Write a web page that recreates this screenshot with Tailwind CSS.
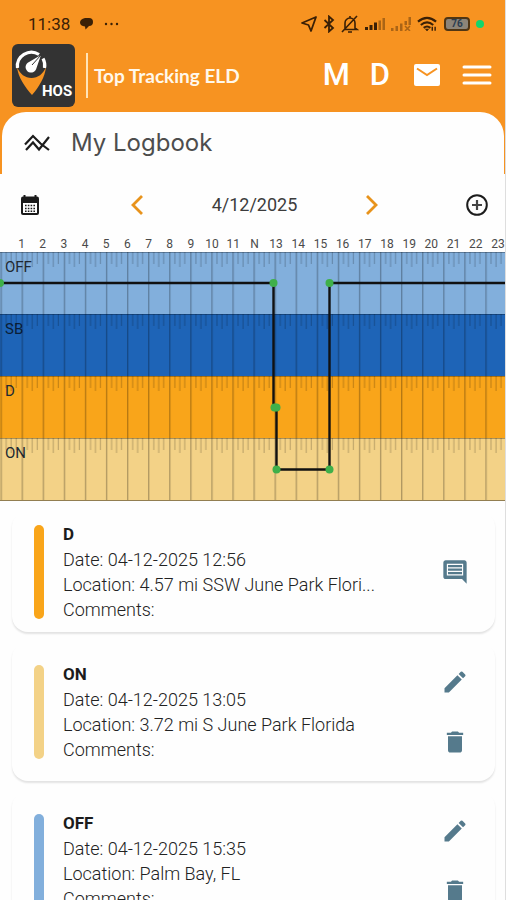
<!DOCTYPE html>
<html lang="en">
<head>
<meta charset="utf-8">
<meta name="viewport" content="width=device-width, initial-scale=1">
<title>Top Tracking ELD</title>
<script src="https://cdn.jsdelivr.net/npm/@tailwindcss/browser@4"></script>
</head>
<body class="h-screen overflow-hidden border-r border-[#dedede] bg-[#fefefe] font-['Roboto',sans-serif] text-[#333]">
<header class="-mr-px bg-[#f79321]">
  <!-- Device status bar -->
  <div class="flex h-[42px] items-center justify-between pt-[6px] pr-[22px] pl-7 text-[#3a2006]">
    <div class="flex items-center gap-[10px]">
      <span class="text-[17px] leading-5">11:38</span>
      <svg class="h-3 w-[14px]" viewBox="0 0 14 12" fill="currentColor"><path d="M5 0h4q4 0 4 4t-4 4l-3.500 3.500-.5-3Q0 8 0 4.500T5 0z"/></svg>
      <svg class="h-1 w-[15px]" viewBox="0 0 15 4" fill="currentColor"><circle cx="2" cy="2" r="1.200"/><circle cx="7.500" cy="2" r="1.200"/><circle cx="13" cy="2" r="1.200"/></svg>
    </div>
    <div class="flex items-center gap-[6px]">
      <svg class="h-4 w-4" viewBox="0 0 16 16" fill="none" stroke="currentColor" stroke-width="1.800" stroke-linejoin="round"><path d="M15 1 1 7l6.500 2L10 15z"/></svg>
      <svg class="h-[18px] w-3" viewBox="0 0 12 18" fill="none" stroke="currentColor" stroke-width="1.800"><path d="M1.500 5l8.500 8-4 3.500v-15L10 5l-8.500 8"/></svg>
      <svg class="h-[18px] w-[18px]" viewBox="0 0 18 18" fill="none" stroke="currentColor" stroke-width="1.600"><path d="M4 14V8a5 5 0 0 1 10 0v5l2 1.500H3M7 17h4M16 1 1 17M9 1v2"/></svg>
      <svg class="h-3 w-5" viewBox="0 0 20 12" fill="currentColor"><path d="M0 9h3v3H0zM4.500 7h3v5h-3zM9 4.500h3V12H9z"/><path opacity=".4" d="M13.500 2.500h2.500V12h-2.500zM17.500 0H20v12h-2.500z"/></svg>
      <svg class="h-[14px] w-5" viewBox="0 0 20 14" fill="currentColor" opacity=".4"><path d="M0 11h2.500v3H0zM4.500 9H7v5H4.500zM9 6.500h2.500V14H9zM13.500 4H16v4h-2.500zM17.500 0H20v8h-2.500z"/><path d="m14 9 5 5m0-5-5 5" stroke="currentColor" stroke-width="1.500"/></svg>
      <svg class="h-4 w-[21px]" viewBox="0 0 22 16" fill="none" stroke="currentColor" stroke-width="2.200"><path d="M1 5.500q9.500-8 19 0M4 9q6.500-5.500 13 0M7 12q3.500-2.800 7 0"/><path d="M9 13.500h3L10.500 15z" fill="currentColor" stroke-width="1"/><path d="M16 11v4m3-4v4" stroke-width="1.500"/></svg>
      <span class="flex h-[14px] w-[26px] items-center justify-center rounded-[4px] border-2 border-[#4f3514] bg-[#8c8479] text-[10px] leading-none font-bold text-[#2b3c50]">76</span>
      <span class="size-2 rounded-full bg-[#12d66c]"></span>
    </div>
  </div>

  <!-- App bar -->
  <div class="flex h-[70px] items-center justify-between pr-[14px] pb-1 pl-3">
    <div class="flex items-center">
      <svg class="size-[63px]" viewBox="0 0 63 63" role="img" aria-label="HOS logo">
        <rect width="63" height="63" rx="6" fill="#333333"/>
        <path d="M5 23C6 33 13 43 20 51 27 43 33 33 34 23 31 30 26 34 19.500 34 13 34 8 30 5 23z" fill="#f79321"/>
        <path d="M5.500 24A14 14 0 0 1 27 10.500M31 14.500A14 14 0 0 1 32.500 24" fill="none" stroke="#fff" stroke-width="3.200"/>
        <path d="M29 11 24.500 24a5.500 5.500 0 1 1-7.500-6z" fill="#fff"/>
        <path d="M29 11 20 21" stroke="#333" stroke-width="1"/>
        <text x="30" y="52" fill="#fff" font-family="Roboto, sans-serif" font-size="15" font-weight="700">HOS</text>
      </svg>
      <div class="ml-[11px] h-[45px] w-[2px] bg-[#ffe3b8]"></div>
      <h1 class="ml-[6px] pt-[2px] font-['Lato',sans-serif] text-[19px] leading-6 font-bold text-[#fff8ec]">Top Tracking ELD</h1>
    </div>
    <nav class="flex items-center text-white">
      <button type="button" class="text-[31px] leading-8 font-medium">M</button>
      <button type="button" class="ml-5 text-[31px] leading-8 font-medium">D</button>
      <button type="button" aria-label="Messages" class="ml-6"><svg class="h-[22px] w-[26px]" viewBox="0 0 26 22"><rect width="26" height="22" rx="2" fill="#fff"/><path d="M3 4.500 13 11l10-6.500" fill="none" stroke="#f79321" stroke-width="2"/></svg></button>
      <button type="button" aria-label="Menu" class="ml-[22px]"><svg class="h-5 w-[30px]" viewBox="0 0 30 20" stroke="#fff" stroke-width="3" stroke-linecap="round"><path d="M2 2h26M2 10h26M2 18h26"/></svg></button>
    </nav>
  </div>

  <!-- Page title -->
  <div class="px-[2px]">
    <div class="flex h-[62px] items-center gap-[21px] rounded-t-[24px] bg-[#fefefe] pl-[22px]">
      <svg class="h-[18px] w-[26px]" viewBox="0 0 26 18" fill="none" stroke="#1c1c1c" stroke-width="2.200"><path d="M1 10.500 9 2l7.500 7.500L25 16M2 16l7-7.500 6 7L25 3"/></svg>
      <h2 class="font-['Inter',sans-serif] text-[24px] leading-8 text-[#4d4d4d]">My Logbook</h2>
    </div>
  </div>
</header>

<main>
  <div class="grid h-[61px] grid-cols-[1fr_auto_1fr] items-center pr-4 pl-5">
    <button type="button" aria-label="Pick a date" class="justify-self-start"><svg class="h-[22px] w-[20px]" viewBox="0 0 20 22"><path d="M3 2.500h14q2 0 2 2V19q0 2-2 2H3q-2 0-2-2V4.500q0-2 2-2z" fill="#1a1a1a"/><path d="M4.500 1v4M15.500 1v4" stroke="#1a1a1a" stroke-width="2"/><path d="M3 9h14v10H3z" fill="#fefefe"/><path d="M5 11.500h10M5 14.500h10M5 17.200h10" stroke="#1a1a1a" stroke-width="1.600" stroke-dasharray="1.600 1.200"/></svg></button>
    <div class="flex w-[250px] items-center justify-between">
      <button type="button" aria-label="Previous day"><svg class="h-[22px] w-[14px]" viewBox="0 0 14 22" fill="none" stroke="#e8931c" stroke-width="2.800"><path d="M12 2 3 11l9 9"/></svg></button>
      <span class="text-[18px] leading-6 text-[#3c3c3c]">4/12/2025</span>
      <button type="button" aria-label="Next day"><svg class="h-[22px] w-[14px]" viewBox="0 0 14 22" fill="none" stroke="#e8931c" stroke-width="2.800"><path d="m2 2 9 9-9 9"/></svg></button>
    </div>
    <button type="button" aria-label="Add entry" class="justify-self-end"><svg class="size-[24px]" viewBox="0 0 24 24" fill="none"><circle cx="12" cy="12" r="9.800" stroke="#1c1c1c" stroke-width="2"/><path d="M12 7v10M7 12h10" stroke="#444" stroke-width="2.200"/></svg></button>
  </div>

  <!-- Hour scale -->
  <div class="-mr-[4px] flex h-[17px] items-center pl-[11px] text-center text-[12px] leading-4 text-[#4a4a4a]">
    <div class="grid flex-[254] grid-cols-12">
      <span>1</span><span>2</span><span>3</span><span>4</span><span>5</span><span>6</span><span>7</span><span>8</span><span>9</span><span>10</span><span>11</span><span>N</span>
    </div>
    <div class="grid flex-[244] grid-cols-11">
      <span>13</span><span>14</span><span>15</span><span>16</span><span>17</span><span>18</span><span>19</span><span>20</span><span>21</span><span>22</span><span>23</span>
    </div>
  </div>

  <!-- Duty status graph -->
  <section aria-label="Duty status graph" class="relative -mr-px text-[15px] leading-5 text-[#222a33]">
    <div class="h-[62px] bg-[#82afdc] pt-[5px] pl-[5px]">OFF</div>
    <div class="h-[62px] bg-[#1e64b7] pt-[5px] pl-[5px] text-[#0b1f38]">SB</div>
    <div class="h-[62px] bg-[#f9a51a] pt-[5px] pl-[5px]">D</div>
    <div class="h-[63px] bg-[#f3d287] pt-[5px] pl-[5px]">ON</div>
    <svg class="absolute inset-0 h-full w-full" viewBox="0 0 506 249" preserveAspectRatio="none">
      <defs>
        <pattern id="hour" x="0.500" y="0" width="21.080" height="62" patternUnits="userSpaceOnUse">
          <path d="M0 .5H22" stroke="#000" stroke-opacity=".3"/>
          <path d="M.7 0V62" stroke="#000" stroke-opacity=".3" stroke-width="1.200"/>
          <path d="M5.700 0V12M10.700 0V15M15.700 0V12" stroke="#000" stroke-opacity=".2" stroke-width="1.200"/>
        </pattern>
      </defs>
      <rect width="506" height="248" fill="url(#hour)"/>
      <path d="M0 248.500H506" stroke="#000" stroke-opacity=".4"/>
      <path d="M0 31H273.500V155H276.500V217.500H329.500V31H506" fill="none" stroke="#111" stroke-width="2.400"/>
      <g fill="#3fb04a"><circle cx="0" cy="31" r="4"/><circle cx="273.500" cy="31" r="4"/><circle cx="274.500" cy="155.500" r="4"/><circle cx="276.500" cy="155.500" r="4"/><circle cx="276.500" cy="217.500" r="4"/><circle cx="329.500" cy="217.500" r="4"/><circle cx="329.500" cy="31" r="4"/></g>
    </svg>
  </section>

  <!-- Log entries -->
  <ul class="flex flex-col gap-[10px] pt-[10px] pr-[10px] pl-3 text-[18px] leading-[25px] font-light text-[#222]">
    <li class="flex min-h-[121px] items-center rounded-[16px] bg-[#fefefe] pr-[10px] pl-[22px] shadow-[0_2px_2px_#0000001c]">
      <div class="h-[94px] w-[10px] rounded-full bg-[#f9a51a]"></div>
      <div class="ml-[19px] flex-1">
        <h3 class="text-[17px] font-bold text-[#1c1c1c]">D</h3>
        <p>Date: 04-12-2025 12:56</p>
        <p>Location: 4.57 mi SSW June Park Flori...</p>
        <p>Comments:</p>
      </div>
      <button type="button" aria-label="Comment" class="flex size-[60px] items-center justify-center"><svg class="size-7" viewBox="0 0 24 24" fill="#557a8c"><path d="M21.990 4c0-1.100-.89-2-1.990-2H4c-1.100 0-2 .9-2 2v12c0 1.100.9 2 2 2h14l4 4-.01-18zM19 15H5V5h14z"/><path d="M6 6h12v2H6zm0 3h12v2H6zm0 3h12v2H6z"/></svg></button>
    </li>
    <li class="flex min-h-[139px] items-center rounded-[16px] bg-[#fefefe] pr-[10px] pl-[22px] shadow-[0_2px_2px_#0000001c]">
      <div class="h-[94px] w-[10px] rounded-full bg-[#f3d287]"></div>
      <div class="ml-[19px] flex-1">
        <h3 class="text-[17px] font-bold text-[#1c1c1c]">ON</h3>
        <p>Date: 04-12-2025 13:05</p>
        <p>Location: 3.72 mi S June Park Florida</p>
        <p>Comments:</p>
      </div>
      <div>
        <button type="button" aria-label="Edit" class="flex size-[60px] items-center justify-center"><svg class="size-7" viewBox="0 0 24 24" fill="#557a8c"><path d="M3 17.250V21h3.750L17.810 9.940l-3.750-3.750L3 17.250zM20.710 7.040a1 1 0 0 0 0-1.410l-2.340-2.340a1 1 0 0 0-1.410 0l-1.830 1.830 3.750 3.750 1.830-1.830z"/></svg></button>
        <button type="button" aria-label="Delete" class="flex size-[60px] items-center justify-center"><svg class="size-7" viewBox="0 0 24 24" fill="#557a8c"><path d="M6 19c0 1.100.9 2 2 2h8c1.100 0 2-.9 2-2V7H6v12zM19 4h-3.500l-1-1h-5l-1 1H5v2h14V4z"/></svg></button>
      </div>
    </li>
    <li class="flex min-h-[139px] items-center rounded-[16px] bg-[#fefefe] pr-[10px] pl-[22px] shadow-[0_2px_2px_#0000001c]">
      <div class="h-[94px] w-[10px] rounded-full bg-[#82afdc]"></div>
      <div class="ml-[19px] flex-1">
        <h3 class="text-[17px] font-bold text-[#1c1c1c]">OFF</h3>
        <p>Date: 04-12-2025 15:35</p>
        <p>Location: Palm Bay, FL</p>
        <p>Comments:</p>
      </div>
      <div>
        <button type="button" aria-label="Edit" class="flex size-[60px] items-center justify-center"><svg class="size-7" viewBox="0 0 24 24" fill="#557a8c"><path d="M3 17.250V21h3.750L17.810 9.940l-3.750-3.750L3 17.250zM20.710 7.040a1 1 0 0 0 0-1.410l-2.340-2.340a1 1 0 0 0-1.410 0l-1.830 1.830 3.750 3.750 1.830-1.830z"/></svg></button>
        <button type="button" aria-label="Delete" class="flex size-[60px] items-center justify-center"><svg class="size-7" viewBox="0 0 24 24" fill="#557a8c"><path d="M6 19c0 1.100.9 2 2 2h8c1.100 0 2-.9 2-2V7H6v12zM19 4h-3.500l-1-1h-5l-1 1H5v2h14V4z"/></svg></button>
      </div>
    </li>
  </ul>
</main>
</body>
</html>
